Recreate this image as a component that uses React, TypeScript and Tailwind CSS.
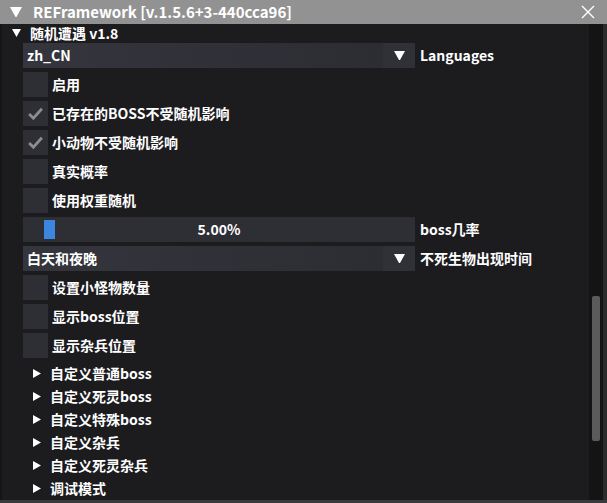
import React from "react";

const font = { fontFamily: '"Noto Sans CJK SC", "Noto Sans", sans-serif' };

function Down({ size = 10, className = "" }: { size?: number; className?: string }) {
  return (
    <svg width={size} height={size * 0.9} viewBox="0 0 10 9" className={className}>
      <polygon points="0,0 10,0 5,9" fill="white" />
    </svg>
  );
}

function Right() {
  return (
    <svg width={8} height={9} viewBox="0 0 8 9">
      <polygon points="0,0 8,4.5 0,9" fill="white" />
    </svg>
  );
}

function Check({ checked, label }: { checked?: boolean; label: string }) {
  return (
    <div className="flex items-center h-[25px]">
      <div className="w-[25px] h-[25px] bg-[#2e2e35] flex items-center justify-center">
        {checked && (
          <svg width={17} height={15} viewBox="0 0 16 14">
            <polyline points="2,7.5 6,11.5 14,2.5" fill="none" stroke="#8d8d90" strokeWidth={2.6} />
          </svg>
        )}
      </div>
      <span className="ml-[4px] text-[14px] font-bold text-white">{label}</span>
    </div>
  );
}

function Combo({ value, label }: { value: string; label: string }) {
  return (
    <div className="flex items-center h-[25px]">
      <div className="w-[392px] h-full flex bg-[#2e2e35]">
        <div className="flex-1 flex items-center pl-[4px] text-[14px] font-bold text-white bg-gradient-to-r from-[#35353d] to-[#2c2c33]">
          {value}
        </div>
        <div className="w-[32px] flex items-center justify-center bg-[#303037]">
          <Down size={11} />
        </div>
      </div>
      <span className="ml-[5px] text-[14px] font-bold text-white">{label}</span>
    </div>
  );
}

const nodes = ["自定义普通boss", "自定义死灵boss", "自定义特殊boss", "自定义杂兵", "自定义死灵杂兵", "调试模式"];

export default function App() {
  return (
    <div className="w-[607px] h-[503px] flex flex-col bg-[#1c1c1f] overflow-hidden" style={font}>
      <div className="h-[24px] shrink-0 bg-[#929292] flex items-center pl-[10px] pr-[12px]">
        <Down size={12} />
        <span className="ml-[11px] text-[15px] font-semibold text-white flex-1">REFramework [v.1.5.6+3-440cca96]</span>
        <svg width={14} height={14} viewBox="0 0 14 14">
          <path d="M1 1 L13 13 M13 1 L1 13" stroke="white" strokeWidth={1.4} />
        </svg>
      </div>
      <div className="flex-1 flex min-h-0 border-b-[3px] border-[#3a3a3c]">
        <div className="flex-1 flex flex-col border-l-[2px] border-[#151517]">
          <div className="h-[19px] flex items-center pl-[10px]">
            <Down size={9} />
            <span className="ml-[9px] text-[14px] font-bold text-white">随机遭遇 v1.8</span>
          </div>
          <div className="pl-[21px] flex flex-col gap-[4px]">
            <Combo value="zh_CN" label="Languages" />
            <Check label="启用" />
            <Check checked label="已存在的BOSS不受随机影响" />
            <Check checked label="小动物不受随机影响" />
            <Check label="真实概率" />
            <Check label="使用权重随机" />
            <div className="flex items-center h-[25px]">
              <div className="w-[392px] h-full bg-[#2e2e35] relative flex items-center justify-center">
                <div className="absolute left-[21px] top-[3px] w-[11px] h-[19px] bg-[#3d86e0]" />
                <span className="text-[14px] font-bold text-white">5.00%</span>
              </div>
              <span className="ml-[5px] text-[14px] font-bold text-white">boss几率</span>
            </div>
            <Combo value="白天和夜晚" label="不死生物出现时间" />
            <Check label="设置小怪物数量" />
            <Check label="显示boss位置" />
            <Check label="显示杂兵位置" />
          </div>
          <div className="mt-[4px] flex flex-col">
            {nodes.map((n) => (
              <div key={n} className="h-[23px] flex items-center pl-[31px]">
                <Right />
                <span className="ml-[9px] text-[14px] font-bold text-white">{n}</span>
              </div>
            ))}
          </div>
        </div>
        <div className="w-[14px] bg-[#141415] pt-[272px] flex justify-center">
          <div className="w-[8px] h-[145px] bg-[#5b5b5c] rounded-[2px]" />
        </div>
        <div className="w-[4px] bg-[#2b2b2d]" />
      </div>
    </div>
  );
}
